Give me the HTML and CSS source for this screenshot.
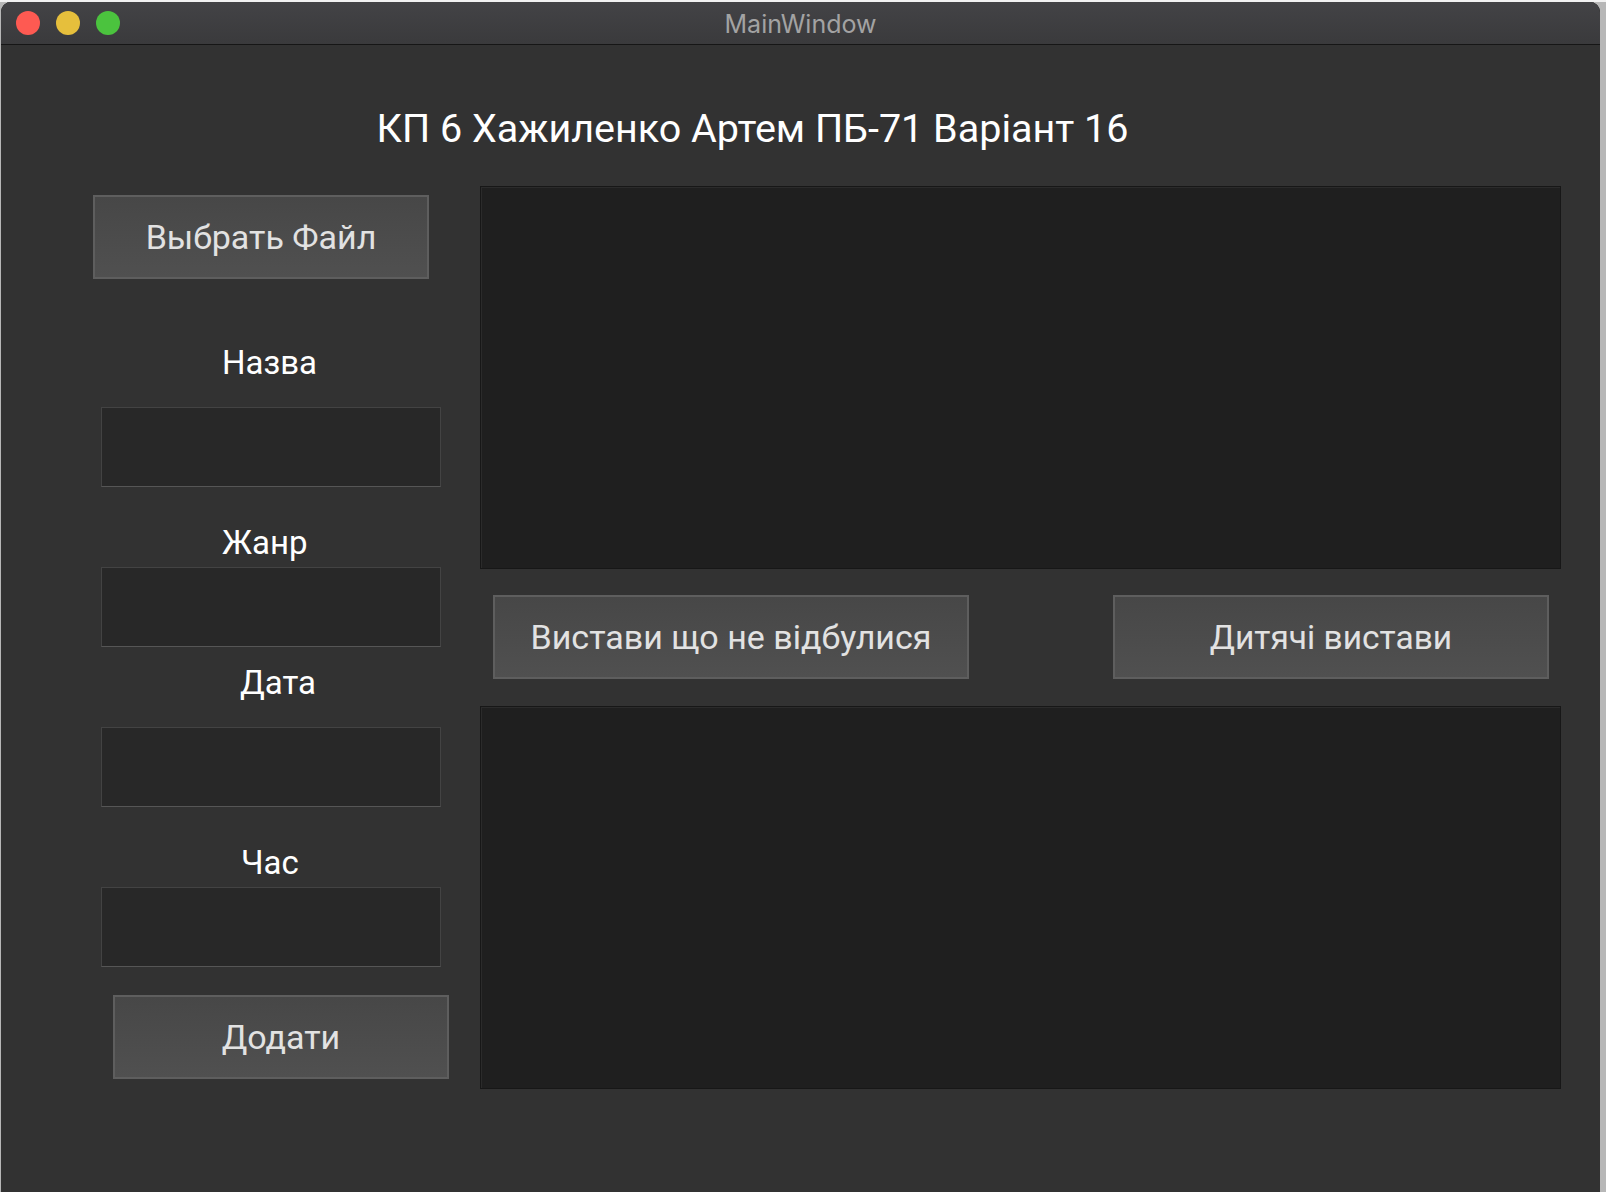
FILE: index.html
```html
<!DOCTYPE html>
<html lang="uk">
<head>
<meta charset="utf-8">
<title>MainWindow</title>
<link rel="stylesheet" href="styles.css">
</head>
<body>
<div class="window">
  <div class="titlebar">
    <div class="lights">
      <span class="light red"></span>
      <span class="light yellow"></span>
      <span class="light green"></span>
    </div>
    <div class="title">MainWindow</div>
  </div>
  <div class="content">
    <h1 class="heading">КП 6 Хажиленко Артем ПБ-71 Варіант 16</h1>
    <div class="main">
      <div class="left">
        <button class="btn btn-file">Выбрать Файл</button>
        <div class="label label-name">Назва</div>
        <div class="field field-name"></div>
        <div class="label label-genre">Жанр</div>
        <div class="field field-genre"></div>
        <div class="label label-date">Дата</div>
        <div class="field field-date"></div>
        <div class="label label-time">Час</div>
        <div class="field field-time"></div>
        <button class="btn btn-add">Додати</button>
      </div>
      <div class="right">
        <div class="panel"></div>
        <div class="actions">
          <button class="btn btn-past">Вистави що не відбулися</button>
          <button class="btn btn-kids">Дитячі вистави</button>
        </div>
        <div class="panel panel-bottom"></div>
      </div>
    </div>
  </div>
</div>
</body>
</html>
```
FILE: styles.css
```css
html, body {
  margin: 0;
  padding: 0;
}
body {
  width: 1606px;
  height: 1192px;
  overflow: hidden;
  background: linear-gradient(to bottom, #f2f2f2 0, #f2f2f2 2px, #b7b7b7 2px);
  font-family: Roboto, "Liberation Sans", sans-serif;
}
.window {
  margin: 2px 0 0 1px;
  width: 1599px;
  height: 1190px;
  border-radius: 10px 10px 0 0;
  overflow: hidden;
  background: #323232;
  box-shadow: inset -1px 0 0 #1c1c1c, inset 1px 0 0 #1c1c1c;
  display: flex;
  flex-direction: column;
}
.titlebar {
  height: 42px;
  flex: none;
  display: flex;
  align-items: center;
  background: linear-gradient(to bottom, #434346, #3a3a3c);
  border-bottom: 1px solid #161616;
  position: relative;
}
.lights {
  display: flex;
  gap: 16px;
  padding-left: 15px;
}
.light {
  width: 24px;
  height: 24px;
  border-radius: 50%;
  display: block;
}
.red { background: #fe5a52; }
.yellow { background: #e6bf3c; }
.green { background: #4bc33e; }
.title {
  position: absolute;
  left: 0;
  right: 0;
  top: 1px;
  bottom: 0;
  display: flex;
  align-items: center;
  justify-content: center;
  color: #a3a3a3;
  font-family: Inter, "Noto Sans", sans-serif;
  font-size: 25px;
}
.content {
  flex: 1;
  background: #323232;
}
.heading {
  margin: 62px 0 0 0;
  padding-right: 96px;
  text-align: center;
  font-weight: normal;
  font-size: 39.5px;
  line-height: 44px;
  height: 44px;
  color: #ffffff;
}
.main {
  display: flex;
  margin-top: 35px;
}
.left {
  width: 479px;
  display: flex;
  flex-direction: column;
  align-items: flex-start;
}
.btn {
  font-family: Roboto, "Liberation Sans", sans-serif;
  font-size: 34px;
  color: #e2e2e2;
  height: 84px;
  border: 2px solid #5e5e5e;
  background: linear-gradient(to bottom, #474747, #505050);
  padding: 0;
  margin: 0;
  box-sizing: border-box;
}
.btn-kids { font-size: 33.5px; }
.btn-file {
  margin: 9px 0 0 92px;
  width: 336px;
}
.label {
  font-size: 33px;
  line-height: 40px;
  height: 40px;
  color: #ffffff;
}
.label-name { margin: 64px 0 0 221px; }
.label-genre { margin: 36px 0 0 221px; }
.label-date { margin: 16px 0 0 239px; }
.label-time { margin: 36px 0 0 240px; }
.field {
  width: 340px;
  height: 80px;
  box-sizing: border-box;
  margin-left: 100px;
  background: #282828;
  border: 1px solid #434343;
  border-bottom-color: #565656;
}
.field-name { margin-top: 24px; }
.field-genre { margin-top: 4px; }
.field-date { margin-top: 24px; }
.field-time { margin-top: 4px; }
.btn-add {
  margin: 28px 0 0 112px;
  width: 336px;
}
.right {
  width: 1081px;
  display: flex;
  flex-direction: column;
}
.panel {
  height: 383px;
  box-sizing: border-box;
  background: #1f1f1f;
  border: 1px solid #171717;
  box-shadow: inset 1px 1px 0 #2b2b2b;
}
.actions {
  display: flex;
  justify-content: space-between;
  padding: 0 12px 0 13px;
  margin-top: 26px;
}
.btn-past { width: 476px; }
.btn-kids { width: 436px; }
.panel-bottom { margin-top: 27px; }
```
